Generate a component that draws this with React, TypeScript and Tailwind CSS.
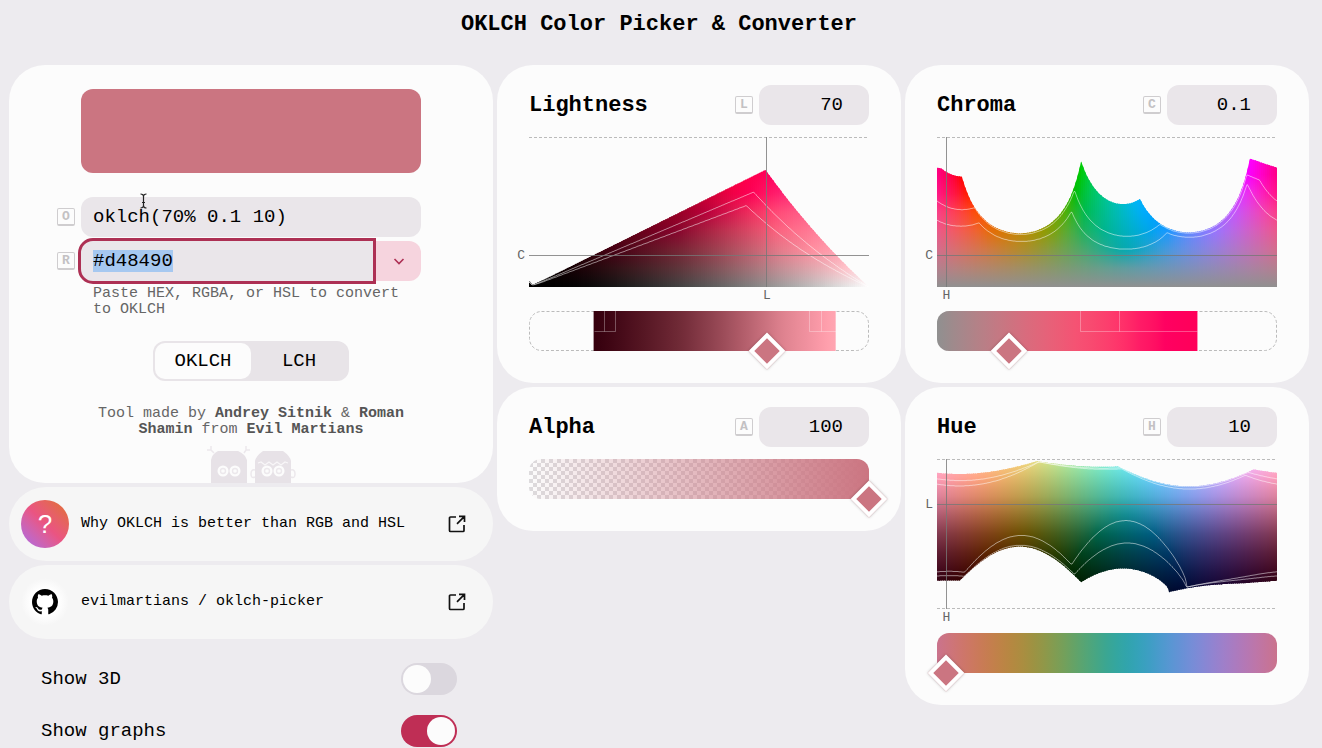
import { useEffect, useRef, useState } from "react";
import type { ReactNode } from "react";

const W = 340;
const H = 150;
const C_MAX = 0.47;

type Gamut = "srgb" | "p3" | "rec2020";

/* ---------- color math ---------- */

function toLinear(l: number, c: number, h: number): number[] {
  const a = c * Math.cos((h * Math.PI) / 180);
  const b = c * Math.sin((h * Math.PI) / 180);
  const x = (l + 0.3963377774 * a + 0.2158037573 * b) ** 3;
  const y = (l - 0.1055613458 * a - 0.0638541728 * b) ** 3;
  const z = (l - 0.0894841775 * a - 1.291485548 * b) ** 3;
  return [
    4.0767416621 * x - 3.3077115913 * y + 0.2309699292 * z,
    -1.2684380046 * x + 2.6097574011 * y - 0.3413193965 * z,
    -0.0041960863 * x - 0.7034186147 * y + 1.707614701 * z,
  ];
}

const MATRICES: Record<Gamut, number[][]> = {
  srgb: [
    [1, 0, 0],
    [0, 1, 0],
    [0, 0, 1],
  ],
  p3: [
    [0.8224621, 0.177538, 0],
    [0.0331941, 0.9668058, 0],
    [0.0170827, 0.0723974, 0.9105199],
  ],
  rec2020: [
    [0.6274039, 0.329283, 0.0433131],
    [0.0690973, 0.9195404, 0.0113623],
    [0.0163914, 0.0880133, 0.8955953],
  ],
};

function convert(rgb: number[], gamut: Gamut): number[] {
  return MATRICES[gamut].map((row) => row[0] * rgb[0] + row[1] * rgb[1] + row[2] * rgb[2]);
}

function inside(l: number, c: number, h: number, gamut: Gamut): boolean {
  return convert(toLinear(l, c, h), gamut).every((v) => v >= -0.000001 && v <= 1.0005);
}

/* Vivid colors are eased toward their P3 coordinates, and the tone range of
   chromatic colors is narrowed, so that clipping does not show as flat bands. */
function css(l: number, c: number, h: number): string {
  const tint = Math.min(1, c / 0.1);
  const tone = l + tint * (0.22 * Math.max(0, 0.45 - l) - 0.35 * Math.max(0, l - 0.74));
  const mix = 0.5 * Math.min(1, Math.max(0, (c - 0.12) / 0.1));
  const rgb = toLinear(tone, c, h);
  const p3 = convert(rgb, "p3");
  const channels = rgb.map((v, i) => {
    const clip = (u: number) => Math.min(1, Math.max(0, u));
    const n = clip(v) * (1 - mix) + clip(p3[i]) * mix;
    const s = n <= 0.0031308 ? 12.92 * n : 1.055 * n ** (1 / 2.4) - 0.055;
    return Math.round(255 * s ** 1.2);
  });
  return `rgb(${channels.join(",")})`;
}

function maxChroma(l: number, h: number, gamut: Gamut): number {
  let c = 0;
  while (c < C_MAX && inside(l, c + 0.001, h, gamut)) c += 0.001;
  return c;
}

function lightnessRange(c: number, h: number, gamut: Gamut): [number, number] {
  let low = 0;
  let high = 1;
  while (low < 1 && !inside(low, c, h, gamut)) low += 0.002;
  while (high > low && !inside(high, c, h, gamut)) high -= 0.002;
  return [low, high];
}

/* ---------- plots ---------- */

interface PlotData {
  area: string;
  lines: string[];
  stops: (x: number) => { offset: number; color: string }[];
}

function toPoints(points: number[][]): string {
  return points.map(([x, y]) => `${x.toFixed(1)},${y.toFixed(2)}`).join(" ");
}

const xs = Array.from({ length: W + 1 }, (_, i) => i);
const OFFSETS = [0, 0.125, 0.25, 0.375, 0.5, 0.625, 0.75, 0.875, 1];

function chromaCurve(at: (x: number) => [number, number], gamut: Gamut) {
  return xs.map((x) => {
    const [l, h] = at(x);
    return [x, H - (maxChroma(l, h, gamut) / C_MAX) * H];
  });
}

function chromaPlot(at: (x: number) => [number, number]): PlotData {
  return {
    area: toPoints([[0, H], ...chromaCurve(at, "rec2020"), [W, H]]),
    lines: [toPoints(chromaCurve(at, "p3")), toPoints(chromaCurve(at, "srgb"))],
    stops: (x) => {
      const [l, h] = at(x);
      return OFFSETS.map((o) => ({ offset: o, color: css(l, (1 - o) * C_MAX, h) }));
    },
  };
}

function huePlot(c: number): PlotData {
  const edge = (gamut: Gamut, side: 0 | 1) =>
    xs.map((x) => [x, H - lightnessRange(c, (x / W) * 360, gamut)[side] * H]);
  return {
    area: toPoints([...edge("rec2020", 1), ...edge("rec2020", 0).reverse()]),
    lines: [
      toPoints(edge("p3", 0)),
      toPoints(edge("srgb", 0)),
      toPoints(edge("p3", 1)),
      toPoints(edge("srgb", 1)),
    ],
    stops: (x) => OFFSETS.map((o) => ({ offset: o, color: css(1 - o, c, (x / W) * 360) })),
  };
}

const lightnessPlot = chromaPlot((x) => [Math.max(0.003, Math.min(0.999, x / W)), 10]);
const chromaHuePlot = chromaPlot((x) => [0.7, (x / W) * 360]);
const hueLightnessPlot = huePlot(0.1);

interface PlotProps {
  id: string;
  data: PlotData;
  x: number;
  y: number;
  xLabel: string;
  yLabel: string;
  closed?: boolean;
}

function Plot({ id, data, x, y, xLabel, yLabel, closed }: PlotProps) {
  const columns = xs.filter((v) => v % 2 === 0 && v < W);
  return (
    <div className="relative mt-3">
      <svg
        className="block h-[150px] w-full"
        viewBox={`0 0 ${W} ${H}`}
        preserveAspectRatio="none"
        aria-hidden="true"
      >
        <defs>
          <clipPath id={`${id}-clip`}>
            <polygon points={data.area} />
          </clipPath>
          {columns.map((v) => (
            <linearGradient
              key={v}
              id={`${id}-${v}`}
              gradientUnits="userSpaceOnUse"
              x1="0"
              x2="0"
              y1="0"
              y2={H}
            >
              {data.stops(v + 1).map((s) => (
                <stop key={s.offset} offset={s.offset} stopColor={s.color} />
              ))}
            </linearGradient>
          ))}
        </defs>
        <g clipPath={`url(#${id}-clip)`}>
          {columns.map((v) => (
            <rect key={v} x={v} y="0" width="3" height={H} fill={`url(#${id}-${v})`} />
          ))}
          {data.lines.map((points, i) => (
            <polyline
              key={i}
              points={points}
              fill="none"
              stroke="#fff"
              strokeOpacity="0.5"
              strokeWidth="1"
            />
          ))}
        </g>
        <path d={`M0 .5H${W}`} stroke="#bbb" strokeDasharray="3 2" />
        {closed && <path d={`M0 ${H - 0.5}H${W}`} stroke="#bbb" strokeDasharray="3 2" />}
        <path
          d={`M0 ${Math.round(y) + 0.5}H${W}M${Math.floor(x) + 0.5} 0V${H}`}
          stroke="#777"
          strokeOpacity="0.8"
          fill="none"
        />
      </svg>
      <span
        className="absolute right-full mr-1 -translate-y-1/2 text-[13px] leading-none text-[#666]"
        style={{ top: `${(y / H) * 100}%` }}
      >
        {yLabel}
      </span>
      <span
        className="absolute top-full mt-[2px] -translate-x-1/2 text-[13px] leading-none text-[#666]"
        style={{ left: `${(x / W) * 100}%` }}
      >
        {xLabel}
      </span>
    </div>
  );
}

/* ---------- sliders ---------- */

interface SliderProps {
  label: string;
  value: number;
  max: number;
  step: number;
  onChange: (value: number) => void;
  className?: string;
  children: ReactNode;
}

function Slider({ label, value, max, step, onChange, className, children }: SliderProps) {
  return (
    <div className={`relative h-10 ${className ?? ""}`}>
      {children}
      <span
        className="absolute top-full size-[26px] -translate-1/2 rotate-45 border-4 border-white bg-[#cb7581] shadow-[0_0_3px_rgba(0,0,0,0.25)]"
        style={{ left: `${(value / max) * 100}%` }}
      />
      <input
        type="range"
        aria-label={label}
        min={0}
        max={max}
        step={step}
        value={value}
        onChange={(e) => onChange(Number(e.target.value))}
        className="absolute inset-0 size-full cursor-pointer opacity-0"
      />
    </div>
  );
}

interface TrackProps {
  id: string;
  start: number;
  end: number;
  color: (t: number) => string;
  marks?: string;
}

function Track({ id, start, end, color, marks }: TrackProps) {
  return (
    <svg
      className="block h-10 w-full"
      viewBox={`0 0 ${W} 40`}
      preserveAspectRatio="none"
      aria-hidden="true"
    >
      <defs>
        <linearGradient id={`${id}-fill`}>
          {Array.from({ length: 33 }, (_, i) => i / 32).map((t) => (
            <stop key={t} offset={t} stopColor={color(start + (end - start) * t)} />
          ))}
        </linearGradient>
        <clipPath id={`${id}-shape`}>
          <rect width={W} height="40" rx="12" />
        </clipPath>
      </defs>
      {(start > 0 || end < 1) && (
        <rect
          x=".5"
          y=".5"
          width={W - 1}
          height="39"
          rx="12"
          fill="none"
          stroke="#bbb"
          strokeDasharray="3 2"
        />
      )}
      <g clipPath={`url(#${id}-shape)`}>
        <rect x={start * W} width={(end - start) * W} height="40" fill={`url(#${id}-fill)`} />
        {marks && <path d={marks} fill="none" stroke="#fff" strokeOpacity="0.3" />}
      </g>
    </svg>
  );
}

const snap = (v: number) => Math.round(v * W) + 0.5;
const wide = lightnessRange(0.1, 10, "rec2020");
const mid = lightnessRange(0.1, 10, "p3");
const narrow = lightnessRange(0.1, 10, "srgb");
const lightnessMarks =
  `M${snap(wide[0])} 20.5H${snap(narrow[0])}V0M${snap(mid[0])} 20.5V0` +
  `M${snap(wide[1])} 20.5H${snap(narrow[1])}V0M${snap(mid[1])} 20.5V0`;
const chromaEnd = maxChroma(0.7, 10, "rec2020") / C_MAX;
const chromaMarks =
  `M${snap(chromaEnd)} 20.5H${snap(maxChroma(0.7, 10, "srgb") / C_MAX)}V0` +
  `M${snap(maxChroma(0.7, 10, "p3") / C_MAX)} 20.5V0`;

/* ---------- building blocks ---------- */

function Key({ children }: { children: string }) {
  return (
    <kbd className="flex size-[18px] shrink-0 items-center justify-center rounded-xs border border-b-2 border-[#cfcdcf] font-[inherit] text-[13px] leading-none font-bold text-[#c3c1c3]">
      {children}
    </kbd>
  );
}

interface CardProps {
  title: string;
  hotkey: string;
  value: number;
  onChange: (value: number) => void;
  children: ReactNode;
}

function Card({ title, hotkey, value, onChange, children }: CardProps) {
  const id = `field-${hotkey}`;
  return (
    <section className="rounded-[36px] bg-[#fcfcfc] px-8 pt-5 pb-8">
      <div className="flex items-center gap-1.5">
        <label htmlFor={id} className="flex-1 pt-0.5 text-[22px] leading-[38px] font-bold">
          {title}
        </label>
        <Key>{hotkey}</Key>
        <input
          id={id}
          inputMode="decimal"
          value={String(value)}
          onChange={(e) => onChange(Number(e.target.value) || 0)}
          className="h-10 w-[110px] rounded-xl bg-[#eae6ea] pr-[26px] text-right text-[19px] outline-none"
        />
      </div>
      {children}
    </section>
  );
}

function ExternalIcon() {
  return (
    <svg
      className="ml-auto size-[18px] shrink-0"
      viewBox="0 0 18 18"
      fill="none"
      stroke="#111"
      strokeWidth="1.7"
      aria-hidden="true"
    >
      <path d="M8 2H2.500a1 1 0 0 0-1 1v12.500a1 1 0 0 0 1 1H15a1 1 0 0 0 1-1V10M11 1.300h5.500V7M16.200 1.600 9 8.800" />
    </svg>
  );
}

function GithubIcon() {
  return (
    <svg className="size-[26px]" viewBox="0 0 16 16" fill="#000" aria-hidden="true">
      <path d="M8 0C3.58 0 0 3.58 0 8c0 3.54 2.29 6.53 5.47 7.59.4.07.55-.17.55-.38 0-.19-.01-.82-.01-1.49-2.01.37-2.53-.49-2.69-.94-.09-.23-.48-.94-.82-1.13-.28-.15-.68-.52-.01-.53.63-.01 1.08.58 1.23.82.72 1.21 1.87.87 2.33.66.07-.52.28-.87.51-1.07-1.78-.2-3.64-.89-3.64-3.95 0-.87.31-1.59.82-2.15-.08-.2-.36-1.02.08-2.12 0 0 .67-.21 2.2.82.64-.18 1.32-.27 2-.27s1.36.09 2 .27c1.53-1.04 2.2-.82 2.2-.82.44 1.1.16 1.92.08 2.12.51.56.82 1.27.82 2.15 0 3.07-1.87 3.75-3.65 3.95.29.25.54.73.54 1.48 0 1.07-.01 1.93-.01 2.2 0 .21.15.46.55.38A8.01 8.01 0 0 0 16 8c0-4.42-3.58-8-8-8Z" />
    </svg>
  );
}

function Martians() {
  return (
    <svg
      className="mx-auto mt-2 block h-[38px] w-[90px]"
      viewBox="0 0 90 38"
      fill="none"
      stroke="#ece8ec"
      aria-hidden="true"
    >
      <path d="M5 38V15Q6 9 12 6h20q7 3 9 9v23Z" fill="#e7e2e7" stroke="none" />
      <path d="M49 38V16q1-5 8-10h20q7 5 8 10v22Z" fill="#e7e2e7" stroke="none" />
      <path d="M8 8 5 5H1M5 5V1M38 8l2-3h4M40 5V1" strokeWidth="1.5" />
      <path d="M49 25q-4-1-4 4t4 3M85 25q4-1 4 4t-4 3" strokeWidth="1.5" />
      <path d="m52 18 3-1 4 3 4-3 4 3 4-3 4 3 4-3 3 1" stroke="#f8f6f8" strokeWidth="1.2" />
      {[17, 29, 61, 73].map((cx) => (
        <g key={cx} stroke="none">
          <circle cx={cx} cy="26" r="5.500" fill="#fcfcfc" />
          <circle cx={cx} cy="26" r="3.200" fill="#ece8ec" />
          <circle cx={cx} cy="26" r="1.800" fill="#fcfcfc" />
        </g>
      ))}
    </svg>
  );
}

interface SwitchProps {
  label: string;
  checked: boolean;
  onChange: (checked: boolean) => void;
}

function Switch({ label, checked, onChange }: SwitchProps) {
  return (
    <label className="flex h-8 items-center justify-between text-[19px]">
      {label}
      <input
        type="checkbox"
        role="switch"
        checked={checked}
        onChange={(e) => onChange(e.target.checked)}
        className="h-8 w-14 appearance-none rounded-full bg-[#dbd7de] p-0.5 before:block before:size-7 before:rounded-full before:bg-[#fcfcfc] checked:bg-[#bf2e55] checked:before:translate-x-6"
      />
    </label>
  );
}

/* ---------- page ---------- */

export default function App() {
  const [lightness, setLightness] = useState(70);
  const [chroma, setChroma] = useState(0.1);
  const [hue, setHue] = useState(10);
  const [alpha, setAlpha] = useState(100);
  const [mode, setMode] = useState("OKLCH");
  const [show3d, setShow3d] = useState(false);
  const [showGraphs, setShowGraphs] = useState(true);
  const rgb = useRef<HTMLInputElement>(null);

  useEffect(() => {
    rgb.current?.focus();
    rgb.current?.select();
  }, []);

  return (
    <div className="min-h-screen bg-[#edebef] pr-[13px] pl-[9px] font-['Liberation_Mono',monospace] text-black">
      <h1 className="pt-[11px] pb-[26px] text-center text-[22px] leading-7 font-bold">
        OKLCH Color Picker &amp; Converter
      </h1>
      <main className="grid grid-cols-[484fr_404fr_404fr] items-start gap-1">
        <div className="flex flex-col gap-1">
          <section className="rounded-[36px] bg-[#fcfcfc] pt-6 pr-[72px] pl-12">
            <div className="ml-6 h-[84px] rounded-xl bg-[#cb7581]" />
            <div className="relative mt-6 flex items-center gap-1.5">
              <Key>O</Key>
              <input
                aria-label="OKLCH code"
                defaultValue="oklch(70% 0.1 10)"
                className="h-10 w-full min-w-0 rounded-xl bg-[#eae6ea] px-3 text-[19px] outline-none"
              />
              <svg
                className="absolute -top-1 left-[82px] h-4 w-[9px]"
                viewBox="0 0 9 16"
                fill="none"
                stroke="#222"
                strokeWidth="1.2"
                aria-hidden="true"
              >
                <path d="M1.500 1q3 0 3 2.500q0-2.500 3-2.500M4.500 3.500v9M1.500 15q3 0 3-2.500q0 2.500 3 2.500M3 9.500h3" />
              </svg>
            </div>
            <div className="mt-1 flex items-center gap-1.5">
              <Key>R</Key>
              <div className="flex min-w-0 flex-1">
                <input
                  ref={rgb}
                  aria-label="RGB code"
                  aria-describedby="rgb-hint"
                  defaultValue="#d48490"
                  className="h-10 min-w-0 flex-1 rounded-l-xl bg-[#eae6ea] px-3 text-[19px] outline-[3px] outline-[#ad3054] selection:bg-[#a6c8f0] selection:text-black"
                />
                <button
                  type="button"
                  aria-label="Other formats"
                  className="ml-[3px] flex h-10 w-[45px] items-center justify-center rounded-r-xl bg-[#f6d4de]"
                >
                  <svg
                    className="size-3"
                    viewBox="0 0 12 12"
                    fill="none"
                    stroke="#ad3054"
                    strokeWidth="1.6"
                    aria-hidden="true"
                  >
                    <path d="m1.500 4 4.500 4.500L10.500 4" />
                  </svg>
                </button>
              </div>
            </div>
            <p id="rgb-hint" className="mt-[5px] ml-9 text-[15px] leading-4 text-[#666]">
              Paste HEX, RGBA, or HSL to convert to OKLCH
            </p>
            <div className="mt-[23px] ml-6 flex justify-center">
              <div className="flex w-[196px] rounded-xl bg-[#e8e4e8] p-0.5">
                {["OKLCH", "LCH"].map((name) => (
                  <button
                    key={name}
                    type="button"
                    aria-pressed={mode === name}
                    onClick={() => setMode(name)}
                    className="h-9 flex-1 rounded-[10px] text-[19px] aria-pressed:bg-[#fcfcfc]"
                  >
                    {name}
                  </button>
                ))}
              </div>
            </div>
            <div className="ml-6">
              <p className="mt-[25px] -mb-px text-center text-[15px] leading-4 text-[#666]">
                Tool made by{" "}
                <a href="#sitnik" className="font-bold text-[#555]">
                  Andrey Sitnik
                </a>{" "}
                &amp;{" "}
                <a href="#shamin" className="font-bold text-[#555]">
                  Roman Shamin
                </a>{" "}
                from{" "}
                <a href="#martians" className="font-bold text-[#555]">
                  Evil Martians
                </a>
              </p>
              <Martians />
            </div>
          </section>

          <a
            href="#why"
            className="flex h-[74px] items-center gap-3 rounded-full bg-[#f6f6f6] pr-[27px] pl-3 text-[15px]"
          >
            <span className="flex size-12 items-center justify-center rounded-full bg-linear-45 from-[#a968ea] via-[#ea5482] to-[#e0701a] font-['Liberation_Sans',sans-serif] text-[26px] text-white">
              ?
            </span>
            Why OKLCH is better than RGB and HSL
            <ExternalIcon />
          </a>
          <a
            href="#github"
            className="flex h-[74px] items-center gap-3 rounded-full bg-[#f6f6f6] pr-[27px] pl-3 text-[15px]"
          >
            <span className="flex size-12 items-center justify-center rounded-full bg-radial from-white from-40% to-[#f6f6f6] to-70%">
              <GithubIcon />
            </span>
            evilmartians / oklch-picker
            <ExternalIcon />
          </a>

          <div className="mt-5 flex flex-col gap-5 pr-9 pl-8">
            <Switch label="Show 3D" checked={show3d} onChange={setShow3d} />
            <Switch label="Show graphs" checked={showGraphs} onChange={setShowGraphs} />
          </div>
        </div>

        <div className="flex flex-col gap-1">
          <Card title="Lightness" hotkey="L" value={lightness} onChange={setLightness}>
            <Plot
              id="lightness"
              data={lightnessPlot}
              x={(lightness / 100) * W}
              y={H - (chroma / C_MAX) * H}
              xLabel="L"
              yLabel="C"
            />
            <Slider
              label="Lightness"
              value={lightness}
              max={100}
              step={1}
              onChange={setLightness}
              className="mt-6"
            >
              <Track
                id="lightness-track"
                start={wide[0]}
                end={wide[1]}
                color={(t) => css(t, 0.1, 10)}
                marks={lightnessMarks}
              />
            </Slider>
          </Card>
          <Card title="Alpha" hotkey="A" value={alpha} onChange={setAlpha}>
            <Slider
              label="Alpha"
              value={alpha}
              max={100}
              step={1}
              onChange={setAlpha}
              className="mt-3"
            >
              <div className="h-10 rounded-xl bg-[linear-gradient(to_right,transparent,#cb7581),repeating-conic-gradient(#dddbdd_0_25%,#fcfcfc_0_50%)] bg-size-[100%_100%,8px_8px]" />
            </Slider>
          </Card>
        </div>

        <div className="flex flex-col gap-1">
          <Card title="Chroma" hotkey="C" value={chroma} onChange={setChroma}>
            <Plot
              id="chroma"
              data={chromaHuePlot}
              x={(hue / 360) * W}
              y={H - (chroma / C_MAX) * H}
              xLabel="H"
              yLabel="C"
            />
            <Slider
              label="Chroma"
              value={chroma}
              max={C_MAX}
              step={0.01}
              onChange={setChroma}
              className="mt-6"
            >
              <Track
                id="chroma-track"
                start={0}
                end={chromaEnd}
                color={(t) => css(0.7, t * C_MAX, 10)}
                marks={chromaMarks}
              />
            </Slider>
          </Card>
          <Card title="Hue" hotkey="H" value={hue} onChange={setHue}>
            <Plot
              id="hue"
              data={hueLightnessPlot}
              x={(hue / 360) * W}
              y={H - (lightness / 100) * H}
              xLabel="H"
              yLabel="L"
              closed
            />
            <Slider
              label="Hue"
              value={hue}
              max={360}
              step={1}
              onChange={setHue}
              className="mt-6"
            >
              <Track id="hue-track" start={0} end={1} color={(t) => css(0.7, 0.1, t * 360)} />
            </Slider>
          </Card>
        </div>
      </main>
    </div>
  );
}
